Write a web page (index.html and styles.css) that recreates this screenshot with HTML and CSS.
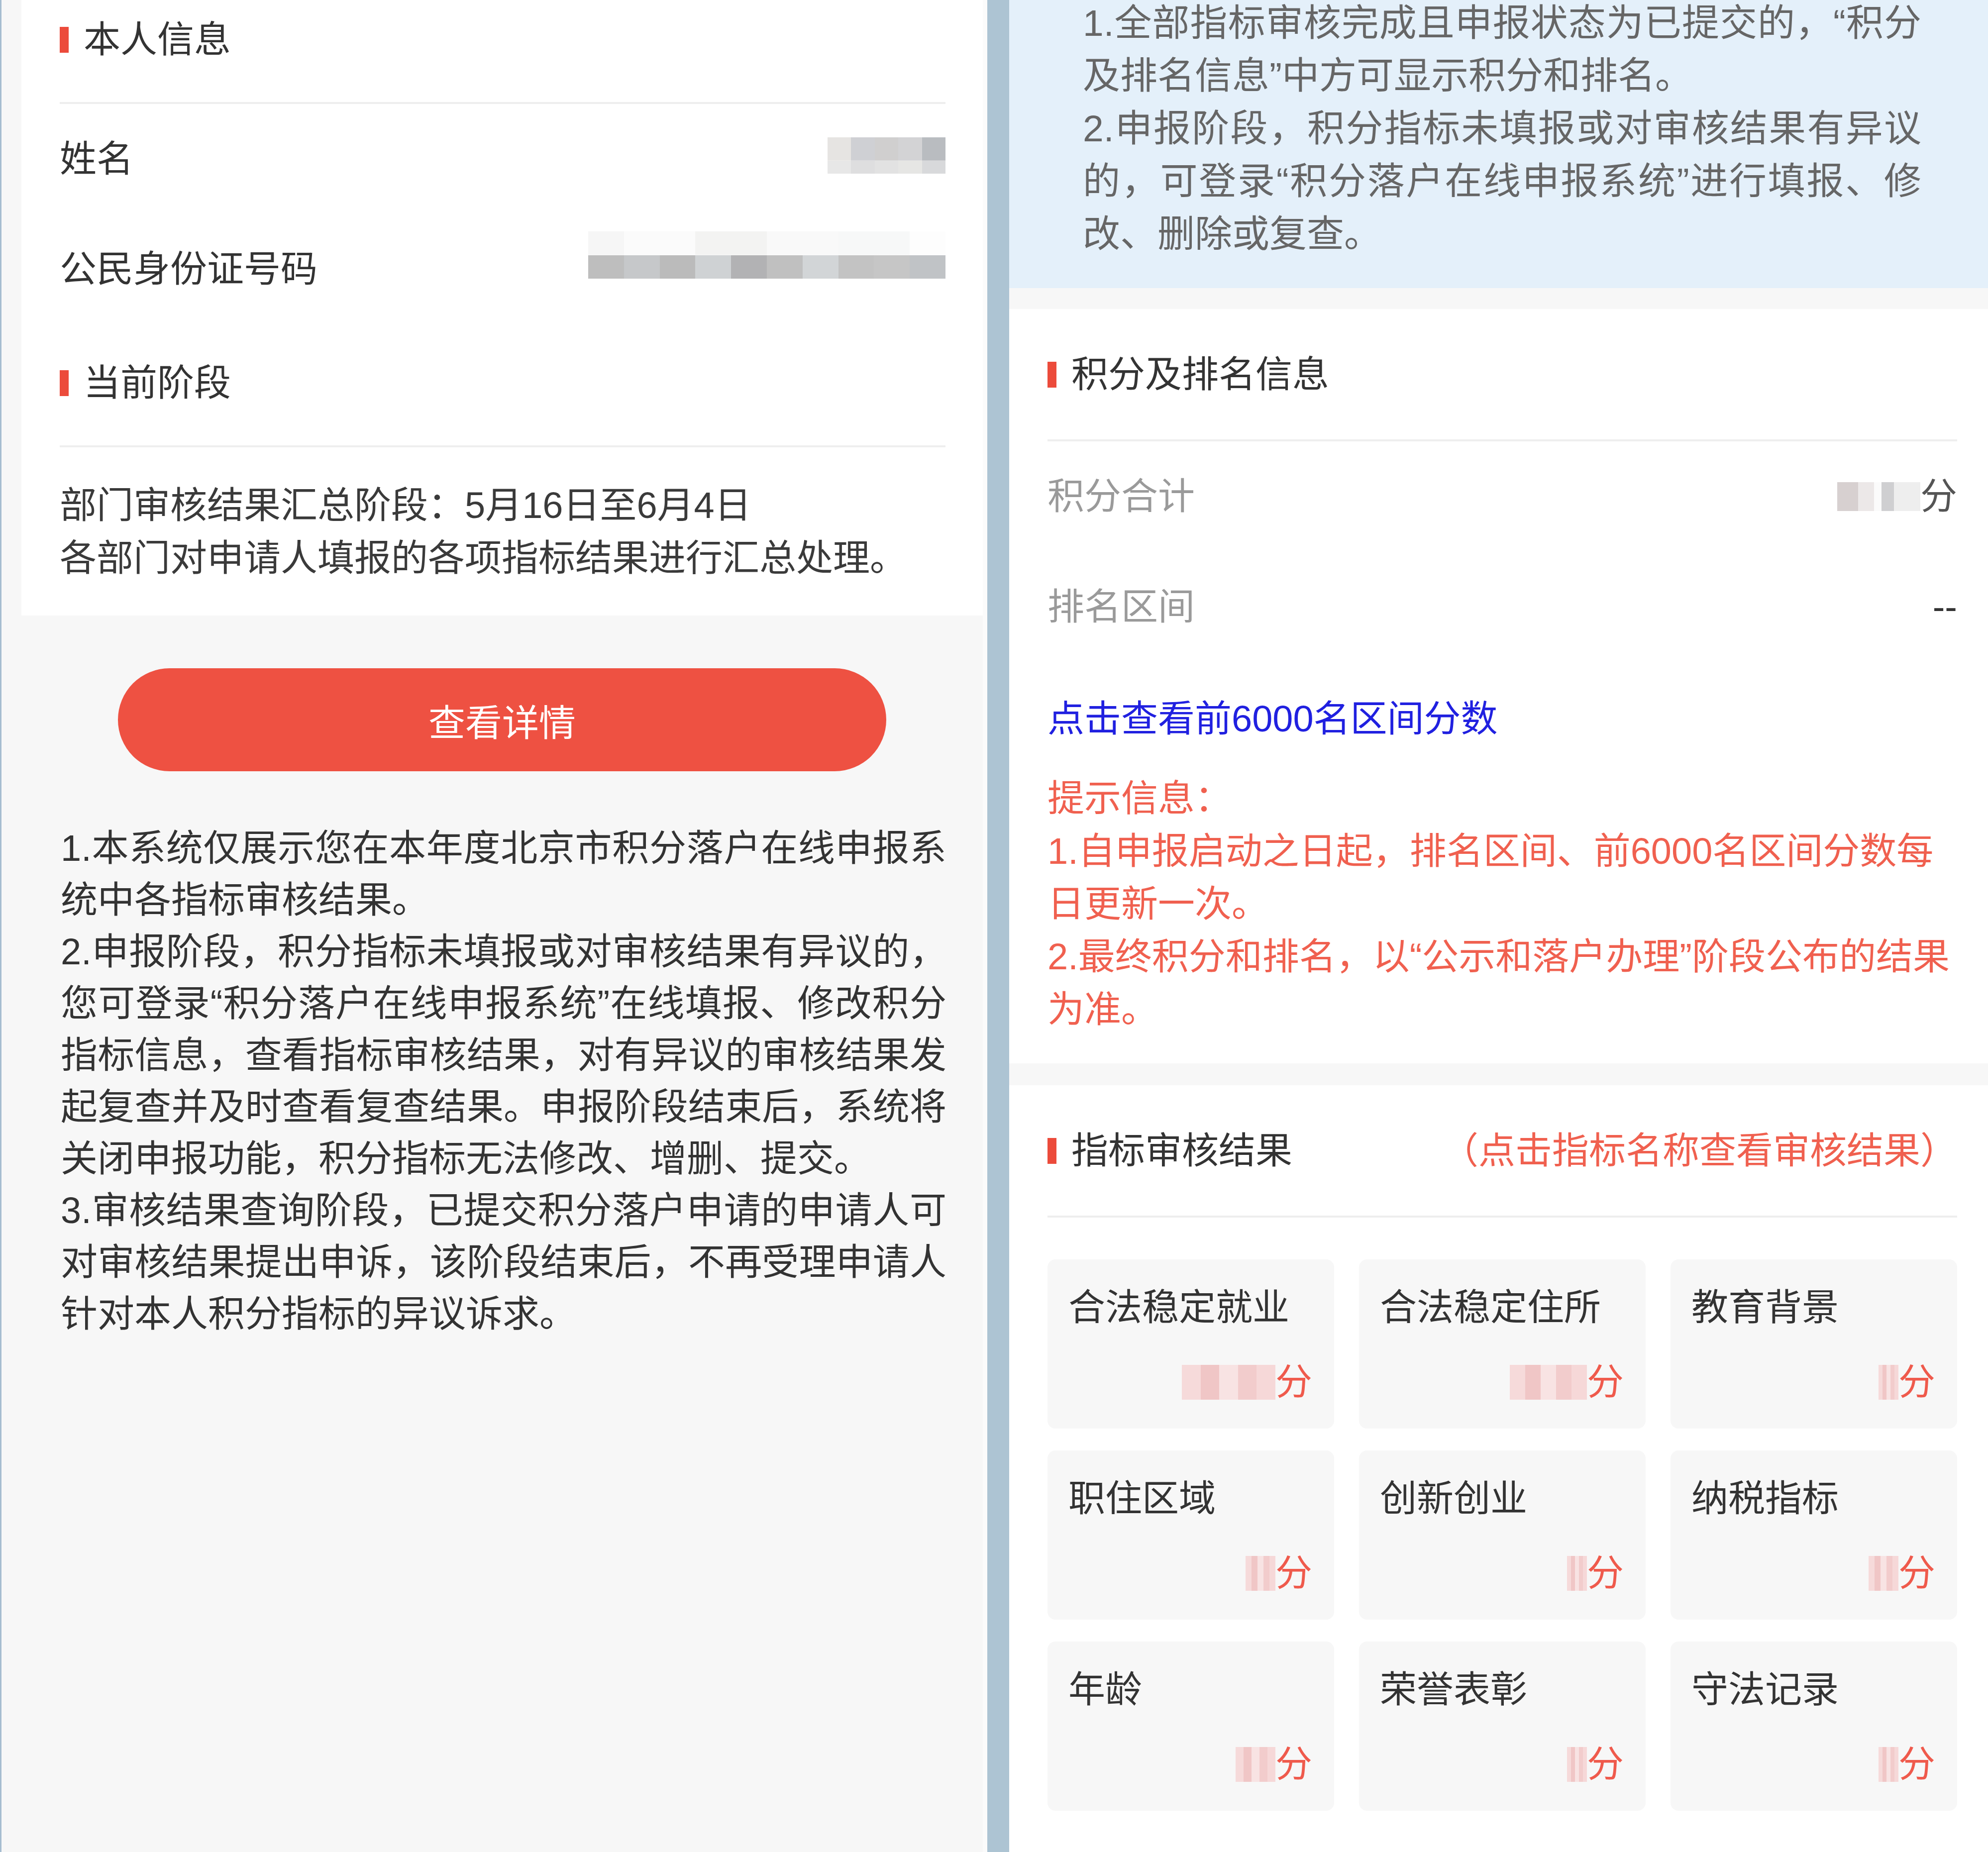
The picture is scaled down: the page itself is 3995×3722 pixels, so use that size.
FILE: index.html
```html
<!DOCTYPE html>
<html lang="zh-CN">
<head>
  <meta charset="UTF-8" />
  <meta name="viewport" content="width=device-width, initial-scale=1.0"/>
  <title>积分落户审核结果查询</title>
  <link rel="stylesheet" href="styles.css">
</head>
<body>
  <div class="page">
    <!-- Left screen: personal info and stage -->
    <div class="screen screen-left">
      <div class="card card-top">
        <div class="block-title">本人信息</div>
        <div class="info-row">
          <span>姓名</span>
          <span class="mask mask-name"></span>
        </div>
        <div class="info-row">
          <span>公民身份证号码</span>
          <span class="mask mask-id"></span>
        </div>

        <div class="block-title">当前阶段</div>
        <div class="stage-text">
          部门审核结果汇总阶段：5月16日至6月4日<br>
          各部门对申请人填报的各项指标结果进行汇总处理。
        </div>
      </div>

      <div class="actions">
        <button class="btn-detail">查看详情</button>
      </div>

      <div class="notes">
        <p>1.本系统仅展示您在本年度北京市积分落户在线申报系统中各指标审核结果。</p>
        <p>2.申报阶段，积分指标未填报或对审核结果有异议的，您可登录“积分落户在线申报系统”在线填报、修改积分指标信息，查看指标审核结果，对有异议的审核结果发起复查并及时查看复查结果。申报阶段结束后，系统将关闭申报功能，积分指标无法修改、增删、提交。</p>
        <p>3.审核结果查询阶段，已提交积分落户申请的申请人可对审核结果提出申诉，该阶段结束后，不再受理申请人针对本人积分指标的异议诉求。</p>
      </div>
    </div>

    <div class="gutter"></div>

    <!-- Right screen: score, ranking and indicator results -->
    <div class="screen screen-right">
      <div class="notice">
        <p>1.全部指标审核完成且申报状态为已提交的，“积分及排名信息”中方可显示积分和排名。</p>
        <p>2.申报阶段，积分指标未填报或对审核结果有异议的，可登录“积分落户在线申报系统”进行填报、修改、删除或复查。</p>
      </div>

      <div class="card card-score">
        <div class="block-title">积分及排名信息</div>
        <div class="info-row muted">
          <span>积分合计</span>
          <span class="value"><span class="mask mask-total"></span>分</span>
        </div>
        <div class="info-row muted">
          <span>排名区间</span>
          <span class="value dark">--</span>
        </div>
        <a class="rank-link" href="#">点击查看前6000名区间分数</a>
        <div class="hint">
          <p>提示信息：</p>
          <p>1.自申报启动之日起，排名区间、前6000名区间分数每日更新一次。</p>
          <p>2.最终积分和排名，以“公示和落户办理”阶段公布的结果为准。</p>
        </div>
      </div>

      <div class="card card-result">
        <div class="block-title">
          指标审核结果
          <span class="title-tip">（点击指标名称查看审核结果）</span>
        </div>
        <div class="result-grid">
          <div class="result-item">
            <div class="item-name">合法稳定就业</div>
            <div class="item-score"><span class="mask mask-pink w-190"></span>分</div>
          </div>
          <div class="result-item">
            <div class="item-name">合法稳定住所</div>
            <div class="item-score"><span class="mask mask-pink w-160"></span>分</div>
          </div>
          <div class="result-item">
            <div class="item-name">教育背景</div>
            <div class="item-score"><span class="mask mask-pink w-40"></span>分</div>
          </div>
          <div class="result-item">
            <div class="item-name">职住区域</div>
            <div class="item-score"><span class="mask mask-pink w-60"></span>分</div>
          </div>
          <div class="result-item">
            <div class="item-name">创新创业</div>
            <div class="item-score"><span class="mask mask-pink w-40"></span>分</div>
          </div>
          <div class="result-item">
            <div class="item-name">纳税指标</div>
            <div class="item-score"><span class="mask mask-pink w-60"></span>分</div>
          </div>
          <div class="result-item">
            <div class="item-name">年龄</div>
            <div class="item-score"><span class="mask mask-pink w-80"></span>分</div>
          </div>
          <div class="result-item">
            <div class="item-name">荣誉表彰</div>
            <div class="item-score"><span class="mask mask-pink w-40"></span>分</div>
          </div>
          <div class="result-item">
            <div class="item-name">守法记录</div>
            <div class="item-score"><span class="mask mask-pink w-40"></span>分</div>
          </div>
        </div>
      </div>
    </div>
  </div>
</body>
</html>
```

FILE: styles.css
```css
/* Reset & base */
* {
  margin: 0;
  padding: 0;
  box-sizing: border-box;
}
html, body {
  width: 100%;
  height: 100%;
  overflow: hidden;
  background: #f7f7f7;
  font-family: "Liberation Sans", "Noto Sans CJK SC", sans-serif;
  font-size: 74px;
  line-height: 104px;
  color: #333;
}

.page {
  display: flex;
  height: 100%;
}

/* Screens */
.screen {
  background: #f7f7f7;
  overflow: hidden;
}
.screen-left {
  width: 1984px;
  flex-shrink: 0;
  border-left: 3px solid #a6bdd0;
  border-right: 9px solid #fbfbfb;
}
.gutter {
  width: 44px;
  flex-shrink: 0;
  background: #adc4d3;
}
.screen-right {
  flex: 1;
  display: flex;
  flex-direction: column;
}

/* Cards */
.card {
  background: #fff;
}
.card-top {
  margin: -39px 0 0 40px;
  padding: 0 75px 62px 77px;
}
.card-score {
  margin-top: 42px;
  padding: 0 62px 55px 77px;
}
.card-result {
  margin-top: 44px;
  padding: 0 62px 0 77px;
  flex: 1;
}

/* Section titles */
.block-title {
  display: flex;
  align-items: center;
  padding: 67px 0 73px;
  border-bottom: 4px solid #eee;
  color: #333;
}
.block-title::before {
  content: "";
  width: 18px;
  height: 52px;
  margin-right: 30px;
  background: #ec4b3b;
}
.card-score .block-title,
.card-result .block-title {
  padding: 80px 0 78px;
}
.title-tip {
  margin-left: auto;
  color: #f0604f;
}

/* Label / value rows */
.info-row {
  display: flex;
  justify-content: space-between;
  align-items: center;
  height: 221px;
}
.card-score .info-row {
  height: 222px;
}
.info-row.muted > span:first-child {
  color: #9a9a9a;
}
.value {
  display: flex;
  align-items: center;
  color: #555;
}
.value.dark {
  color: #333;
}

.stage-text {
  padding-top: 64px;
  line-height: 106px;
  color: #3a3a3a;
}

/* Blurred personal data */
.mask {
  display: inline-block;
}
.mask-name {
  width: 237px;
  height: 73px;
  margin-bottom: 14px;
  background:
    linear-gradient(90deg, #e6e4e2 0 20%, #cfd0d4 20% 40%, #d0cfcf 40% 60%, #d3d3d5 60% 80%, #b9bcc0 80% 100%) top / 100% 64% no-repeat,
    linear-gradient(90deg, #e7e7e7 0 20%, #dededf 20% 40%, #e2e2e2 40% 60%, #e6e6e4 60% 80%, #d8d9db 80% 100%) bottom / 100% 36% no-repeat;
}
.mask-id {
  width: 718px;
  height: 95px;
  margin-bottom: 56px;
  background:
    linear-gradient(90deg, #f6f6f6 0 10%, #fbfbfb 10% 30%, #f3f3f2 30% 50%, #f9f9f9 50% 70%, #f7f8f8 70% 90%, #fdfdfd 90% 100%) top / 100% 50% no-repeat,
    linear-gradient(90deg, #bebebe 0 10%, #c6c8ca 10% 20%, #bbbbbb 20% 30%, #cfd2d4 30% 40%, #b2b2b4 40% 50%, #c0c0c0 50% 60%, #d2d5d7 60% 70%, #c3c3c3 70% 80%, #c6c6c6 80% 90%, #c0c3c6 90% 100%) bottom / 100% 50% no-repeat;
}
.mask-total {
  width: 178px;
  height: 58px;
  background: linear-gradient(90deg, #fff 0 6%, #d7d0d0 6% 30%, #ece8e8 30% 48%, #fbfbfb 48% 56%, #cfcfd1 56% 70%, #eeeeee 70% 100%);
}
.mask-pink {
  height: 70px;
  background: linear-gradient(90deg, #f6dada 0 20%, #f0c6c6 20% 40%, #f8e3e3 40% 60%, #f2cccc 60% 80%, #f6d8d8 80% 100%);
}
.w-190 { width: 188px; }
.w-160 { width: 155px; }
.w-80 { width: 80px; }
.w-60 { width: 60px; }
.w-40 { width: 40px; }

/* Detail button */
.actions {
  display: flex;
  justify-content: center;
  padding-left: 40px;
  margin-top: 106px;
}
.btn-detail {
  width: 1544px;
  height: 207px;
  border: none;
  border-radius: 104px;
  background: #ee5142;
  color: #fff;
  font-family: inherit;
  font-size: 74px;
}

/* Notes under the button */
.notes {
  margin: 103px 73px 0 119px;
  text-align: justify;
  color: #333;
}

/* Blue notice on the right */
.notice {
  margin-top: -7px;
  padding: 0 134px 56px 148px;
  background: #e4f0fa;
  color: #666;
  font-size: 75px;
  line-height: 106px;
  text-align: justify;
}

.rank-link {
  display: block;
  margin-top: 61px;
  line-height: 106px;
  color: #2020e0;
  text-decoration: none;
}
.hint {
  margin-top: 54px;
  line-height: 106px;
  color: #f0604f;
}

/* Indicator grid */
.result-grid {
  display: grid;
  grid-template-columns: repeat(3, 1fr);
  gap: 44px 50px;
  margin-top: 84px;
}
.result-item {
  height: 340px;
  padding: 45px 44px 0 42px;
  border-radius: 16px;
  background: #f7f7f7;
}
.item-name {
  color: #333;
}
.item-score {
  display: flex;
  justify-content: flex-end;
  align-items: center;
  margin-top: 46px;
  color: #ef5a4c;
}
```
